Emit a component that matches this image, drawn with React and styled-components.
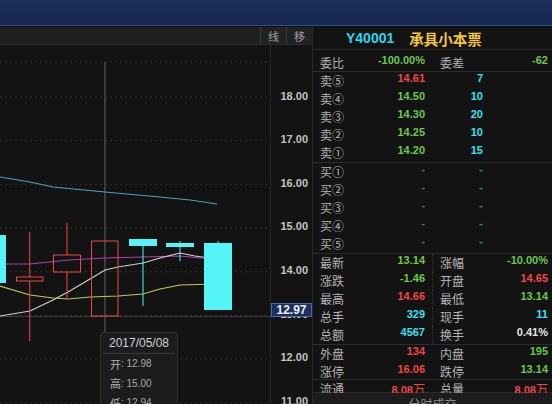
import React from "react";
import styled, { createGlobalStyle } from "styled-components";

const Global = createGlobalStyle`
  html, body { margin: 0; padding: 0; background: #0c0c0c; }
  body { font-family: "Liberation Sans", "Noto Sans CJK SC", sans-serif; }
  * { box-sizing: border-box; }
`;

const C = {
  green: "#6cc84e",
  red: "#f04646",
  cyan: "#38e2f2",
  white: "#e4e4e4",
  label: "#b6b6b6",
  line: "#2c2c2c",
};

const Page = styled.div`
  width: 552px;
  height: 404px;
  overflow: hidden;
  background: #0c0c0c;
  display: flex;
  flex-direction: column;
`;

const TopBar = styled.div`
  height: 26px;
  flex: none;
  background: linear-gradient(#1b2e59, #17284c);
  border-bottom: 1px solid #2f4f93;
`;

const Main = styled.div`
  flex: 1;
  display: flex;
  padding-top: 1px;
  min-height: 0;
`;

const LeftPane = styled.div`
  width: 312px;
  flex: none;
  display: flex;
  flex-direction: column;
  background: #131313;
`;

const Toolbar = styled.div`
  height: 18px;
  flex: none;
  display: flex;
  justify-content: flex-end;
  background: #1e1f21;
  border-bottom: 1px solid #2b2b2b;
`;

const ToolButton = styled.div`
  width: 26px;
  display: flex;
  align-items: center;
  justify-content: center;
  border-left: 1px solid #3a3a3a;
  background: #202123;
  color: #a0a0a0;
  font: 11px "Noto Sans CJK SC", sans-serif;
`;

const ChartArea = styled.div`
  flex: 1;
  display: flex;
  position: relative;
  min-height: 0;
`;

const Plot = styled.svg`
  width: 270px;
  height: 359px;
  flex: none;
  display: block;
`;

const Axis = styled.div`
  flex: 1;
  position: relative;
  border-left: 1px solid #272727;
  padding-top: 28.7px;
  display: flex;
  flex-direction: column;
`;

const AxisLabel = styled.div`
  height: 43.67px;
  flex: none;
  display: flex;
  align-items: center;
  justify-content: flex-end;
  padding-right: 4px;
  color: #c4c4c4;
  font: bold 11px "Liberation Sans", sans-serif;
`;

const PriceBadge = styled.div`
  position: absolute;
  left: 0;
  right: 0;
  top: 258px;
  height: 14px;
  background: #1b305e;
  border: 1px solid #4a68a6;
  color: #f0f0f0;
  font: bold 12px "Liberation Sans", sans-serif;
  line-height: 12px;
  text-align: center;
`;

const Tooltip = styled.div`
  position: absolute;
  left: 100px;
  top: 287px;
  width: 78px;
  height: 130px;
  background: #1c1c1e;
  border: 1px solid #303033;
  border-radius: 3px;
  display: flex;
  flex-direction: column;
  padding: 0 2px;
`;

const TipTitle = styled.div`
  height: 21px;
  flex: none;
  border-bottom: 1px solid #3a3a3c;
  color: #d2d2d2;
  font: 12px "Liberation Sans", sans-serif;
  display: flex;
  align-items: center;
  justify-content: center;
`;

const TipRow = styled.div`
  height: 19.5px;
  flex: none;
  padding-left: 7px;
  display: flex;
  align-items: center;
  color: #a8a8a8;
  font: 10px "Liberation Sans", "Noto Sans CJK SC", sans-serif;
  &:first-of-type { margin-top: 1px; }
`;

const TipKey = styled.span`
  font: 11px "Noto Sans CJK SC", sans-serif;
  color: #b0b0b0;
`;

const RightPane = styled.div`
  flex: 1;
  border-left: 1px solid #2a2a2a;
  background: #131313;
  display: flex;
  flex-direction: column;
  min-width: 0;
`;

const Header = styled.div`
  height: 23px;
  flex: none;
  border-bottom: 1px solid ${C.line};
  display: flex;
  align-items: center;
  gap: 15px;
  padding-left: 33px;
`;

const Code = styled.span`
  color: #2ad6ea;
  font: bold 14px "Liberation Sans", sans-serif;
`;

const Name = styled.span`
  color: #f4c63e;
  font: bold 14.5px "Noto Sans CJK SC", sans-serif;
`;

const Block = styled.div`
  flex: none;
  border-bottom: 1px solid ${C.line};
  padding-top: ${(p) => p.$pt || 0}px;
  height: ${(p) => p.$h}px;
  display: flex;
  flex-direction: column;
`;

const Row = styled.div`
  height: ${(p) => p.$h || 18}px;
  line-height: ${(p) => p.$h || 18}px;
  flex: none;
  display: grid;
  grid-template-columns: 40px 65px ${(p) => (p.$book ? "58px" : "1fr 1fr")};
  ${(p) => (p.$book ? "" : "grid-template-columns: 40px 65px 48px 1fr;")}
  padding: 0 4px 0 7px;
`;

const Label = styled.span`
  color: ${C.label};
  font: 12px "Noto Sans CJK SC", sans-serif;
  white-space: nowrap;
`;

const Label2 = styled(Label)`
  margin-left: 7px;
  padding-left: 7px;
  border-left: 1px ${(p) => (p.$dotted ? "dotted #353535" : "solid transparent")};
`;

const Value = styled.span`
  text-align: right;
  color: ${(p) => p.$c};
  font: bold 11px "Liberation Sans", "Noto Sans CJK SC", sans-serif;
  white-space: nowrap;
  opacity: ${(p) => (p.$dim ? 0.6 : 1)};
`;

const Unit = styled.span`
  font: 12px "Noto Sans CJK SC", sans-serif;
`;

const BottomBar = styled.div`
  flex: 1;
  background: #1c1c1c;
  color: #8a8a8a;
  font: 12px "Noto Sans CJK SC", sans-serif;
  text-align: center;
  padding-top: 2px;
  overflow: hidden;
`;

const Y = (p) => 97 + (18 - p) * 43.67;

const candles = [
  { x: -8, w: 14, top: 235, bot: 283, hi: 235, lo: 283, up: false },
  { x: 16.5, w: 26.5, top: 277, bot: 281, hi: 232, lo: 341, up: true },
  { x: 53.5, w: 27, top: 255, bot: 272, hi: 223, lo: 299, up: true },
  { x: 91.5, w: 26.5, top: 241, bot: 316, hi: 241, lo: 316, up: true },
  { x: 129, w: 28, top: 239, bot: 246, hi: 239, lo: 306, up: false },
  { x: 166, w: 28, top: 243, bot: 247, hi: 241, lo: 261, up: false },
  { x: 204, w: 28, top: 243, bot: 310, hi: 241, lo: 310, up: false },
];

const lines = [
  { c: "#4aa6b8", pts: [[0, 177], [30, 182], [53, 187], [105, 192], [160, 197], [190, 200], [217, 204]] },
  { c: "#a544a8", pts: [[0, 264], [30, 264], [68, 260], [105, 258], [143, 257], [180, 256], [200, 258], [217, 259]] },
  { c: "#cfcfcf", pts: [[0, 316], [30, 311], [53, 300], [68, 292], [90, 279], [105, 270], [118, 267], [143, 263], [160, 258], [180, 253], [195, 256], [217, 259]] },
  { c: "#c6c65a", pts: [[0, 286], [30, 295], [53, 298], [68, 299], [90, 297], [118, 296], [143, 294], [160, 289], [180, 285], [217, 284]] },
];

function Chart() {
  const grid = [62, 18, 17, 16, 15, 14, 13, 12, 11].map((p, i) => (i === 0 ? 62 : Y(p)));
  return (
    <Plot viewBox="0 45 270 359">
      {grid.map((y, i) => (
        <line key={i} x1="0" x2="270" y1={y} y2={y} stroke="#2e2e2e" strokeDasharray="2 3" />
      ))}
      <line x1="0" x2="270" y1="316.5" y2="316.5" stroke="#3c3c3c" />
      <line x1="105" x2="105" y1="62" y2="332" stroke="#4a4a4a" strokeWidth="1.5" />
      {lines.map((l, i) => (
        <polyline key={i} points={l.pts.map((p) => p.join(",")).join(" ")} fill="none" stroke={l.c} strokeWidth="1.2" />
      ))}
      {candles.map((k, i) => {
        const cx = k.x + k.w / 2;
        const col = k.up ? "#ec4a4a" : "#54f4f8";
        return (
          <g key={i}>
            {k.hi < k.top && <line x1={cx} x2={cx} y1={k.hi} y2={k.top} stroke={col} />}
            {k.lo > k.bot && <line x1={cx} x2={cx} y1={k.bot} y2={k.lo} stroke={col} />}
            {k.up ? (
              <rect x={k.x} y={k.top} width={k.w} height={k.bot - k.top} fill="none" stroke={col} />
            ) : (
              <rect x={k.x} y={k.top} width={k.w} height={k.bot - k.top} fill={col} />
            )}
          </g>
        );
      })}
    </Plot>
  );
}

const sells = [
  ["卖⑤", "14.61", C.red, "7"],
  ["卖④", "14.50", C.green, "10"],
  ["卖③", "14.30", C.green, "20"],
  ["卖②", "14.25", C.green, "10"],
  ["卖①", "14.20", C.green, "15"],
];
const buys = ["买①", "买②", "买③", "买④", "买⑤"];

const stats = [
  ["最新", "13.14", C.green, "涨幅", "-10.00%", C.green],
  ["涨跌", "-1.46", C.green, "开盘", "14.65", C.red],
  ["最高", "14.66", C.red, "最低", "13.14", C.green],
  ["总手", "329", C.cyan, "现手", "11", C.cyan],
  ["总额", "4567", C.cyan, "换手", "0.41%", C.white],
];

export default function App() {
  return (
    <Page>
      <Global />
      <TopBar />
      <Main>
        <LeftPane>
          <Toolbar>
            <ToolButton>线</ToolButton>
            <ToolButton>移</ToolButton>
          </Toolbar>
          <ChartArea>
            <Chart />
            <Axis>
              {["18.00", "17.00", "16.00", "15.00", "14.00", "13.00", "12.00", "11.00"].map((t) => (
                <AxisLabel key={t}>{t}</AxisLabel>
              ))}
              <PriceBadge>12.97</PriceBadge>
            </Axis>
            <Tooltip>
              <TipTitle>2017/05/08</TipTitle>
              <TipRow><TipKey>开</TipKey>: 12.98</TipRow>
              <TipRow><TipKey>高</TipKey>: 15.00</TipRow>
              <TipRow><TipKey>低</TipKey>: 12.94</TipRow>
            </Tooltip>
          </ChartArea>
        </LeftPane>
        <RightPane>
          <Header>
            <Code>Y40001</Code>
            <Name>承具小本票</Name>
          </Header>
          <Block $h={22} $pt={4}>
            <Row>
              <Label>委比</Label>
              <Value $c={C.green}>-100.00%</Value>
              <Label2>委差</Label2>
              <Value $c={C.green}>-62</Value>
            </Row>
          </Block>
          <Block $h={91}>
            {sells.map(([l, p, pc, v]) => (
              <Row $book key={l}>
                <Label>{l}</Label>
                <Value $c={pc}>{p}</Value>
                <Value $c={C.cyan}>{v}</Value>
              </Row>
            ))}
          </Block>
          <Block $h={91}>
            {buys.map((l) => (
              <Row $book key={l}>
                <Label>{l}</Label>
                <Value $c={C.green} $dim>-</Value>
                <Value $c={C.cyan} $dim>-</Value>
              </Row>
            ))}
          </Block>
          <Block $h={91}>
            {stats.map(([a, av, ac, b, bv, bc]) => (
              <Row key={a}>
                <Label>{a}</Label>
                <Value $c={ac}>{av}</Value>
                <Label2 $dotted>{b}</Label2>
                <Value $c={bc}>{bv}</Value>
              </Row>
            ))}
          </Block>
          <Block $h={35}>
            <Row>
              <Label>外盘</Label>
              <Value $c={C.red}>134</Value>
              <Label2>内盘</Label2>
              <Value $c={C.green}>195</Value>
            </Row>
            <Row $h={16}>
              <Label>涨停</Label>
              <Value $c={C.red}>16.06</Value>
              <Label2>跌停</Label2>
              <Value $c={C.green}>13.14</Value>
            </Row>
          </Block>
          <Block $h={13}>
            <Row $h={12}>
              <Label>流通</Label>
              <Value $c={C.red}>8.08<Unit>万</Unit></Value>
              <Label2>总量</Label2>
              <Value $c={C.red}>8.08<Unit>万</Unit></Value>
            </Row>
          </Block>
          <BottomBar>分时成交</BottomBar>
        </RightPane>
      </Main>
    </Page>
  );
}
